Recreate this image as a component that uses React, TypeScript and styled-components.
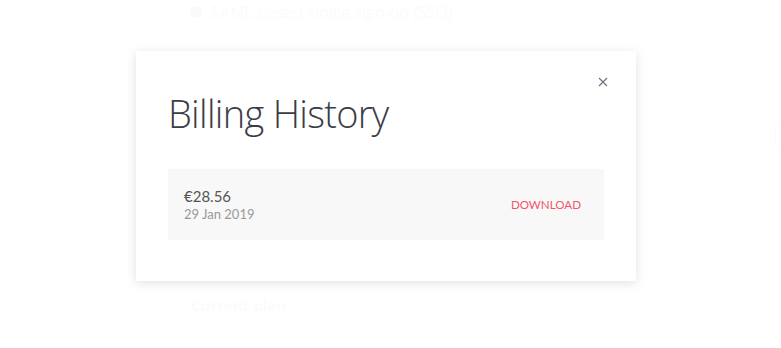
import styled, { createGlobalStyle } from "styled-components";

const Global = createGlobalStyle`
  html, body {
    margin: 0;
    padding: 0;
    background: #fff;
  }
  body {
    font-family: "Open Sans", "Liberation Sans", sans-serif;
  }
`;

const Page = styled.div`
  position: relative;
  width: 781px;
  height: 348px;
  overflow: hidden;
  background: #fff;
`;

const Backdrop = styled.div`
  padding: 4px 0 0 190px;
  color: #f5f5f5;
  font-family: "Open Sans", sans-serif;

  .edge {
    position: absolute;
    right: -6px;
    top: 120px;
    width: 10px;
    height: 28px;
    border: 1px solid #f5f5f5;
    border-radius: 6px;
  }
`;

const Option = styled.label`
  display: flex;
  align-items: center;
  gap: 9px;
  font-size: 16px;
  line-height: 16px;
`;

const Radio = styled.span`
  width: 12px;
  height: 12px;
  border-radius: 50%;
  background: #f3f3f3;
`;

const SectionTitle = styled.h3`
  margin: 275px 0 0 1px;
  font-size: 15px;
  font-weight: 700;
  color: #f4f4f4;
`;

const Overlay = styled.div`
  position: absolute;
  inset: 0;
  background: rgba(255, 255, 255, 0.6);
  display: flex;
  align-items: flex-start;
  padding: 51px 0 0 136px;
`;

const Modal = styled.div`
  position: relative;
  width: 500px;
  box-sizing: border-box;
  padding: 38px 32px 41px;
  background: #fff;
  box-shadow: 0 2px 10px rgba(0, 0, 0, 0.12);
`;

const Close = styled.button`
  position: absolute;
  top: 19px;
  right: 21px;
  width: 24px;
  height: 24px;
  padding: 0;
  border: 0;
  background: none;
  color: #6b7480;
  display: flex;
  align-items: center;
  justify-content: center;
`;

const Title = styled.h2`
  margin: 0 0 32px;
  font-family: "Open Sans", sans-serif;
  font-weight: 300;
  font-size: 38px;
  letter-spacing: -0.7px;
  line-height: 48px;
  color: #3a3d46;
`;

const Row = styled.div`
  display: flex;
  align-items: center;
  justify-content: space-between;
  height: 71px;
  padding: 0 23px 0 16px;
  background: #f8f8f8;
  font-family: "Lato", sans-serif;
`;

const Amount = styled.div`
  font-size: 15px;
  line-height: 18px;
  color: #555;
`;

const Date = styled.div`
  font-size: 13px;
  line-height: 18px;
  color: #999;
`;

const Download = styled.a`
  font-size: 11.6px;
  color: #f2556c;
  text-transform: uppercase;
`;

export default function App() {
  return (
    <Page>
      <Global />
      <Backdrop>
        <Option>
          <Radio />
          SAML-based single sign-on (SSO)
        </Option>
        <SectionTitle>Current plan</SectionTitle>
        <div className="edge" />
      </Backdrop>
      <Overlay>
        <Modal>
          <Close aria-label="Close">
            <svg width="10" height="10" viewBox="0 0 10 10">
              <path d="M1 1L9 9M9 1L1 9" stroke="currentColor" strokeWidth="1.2" />
            </svg>
          </Close>
          <Title>Billing History</Title>
          <Row>
            <div>
              <Amount>€28.56</Amount>
              <Date>29 Jan 2019</Date>
            </div>
            <Download>Download</Download>
          </Row>
        </Modal>
      </Overlay>
    </Page>
  );
}
